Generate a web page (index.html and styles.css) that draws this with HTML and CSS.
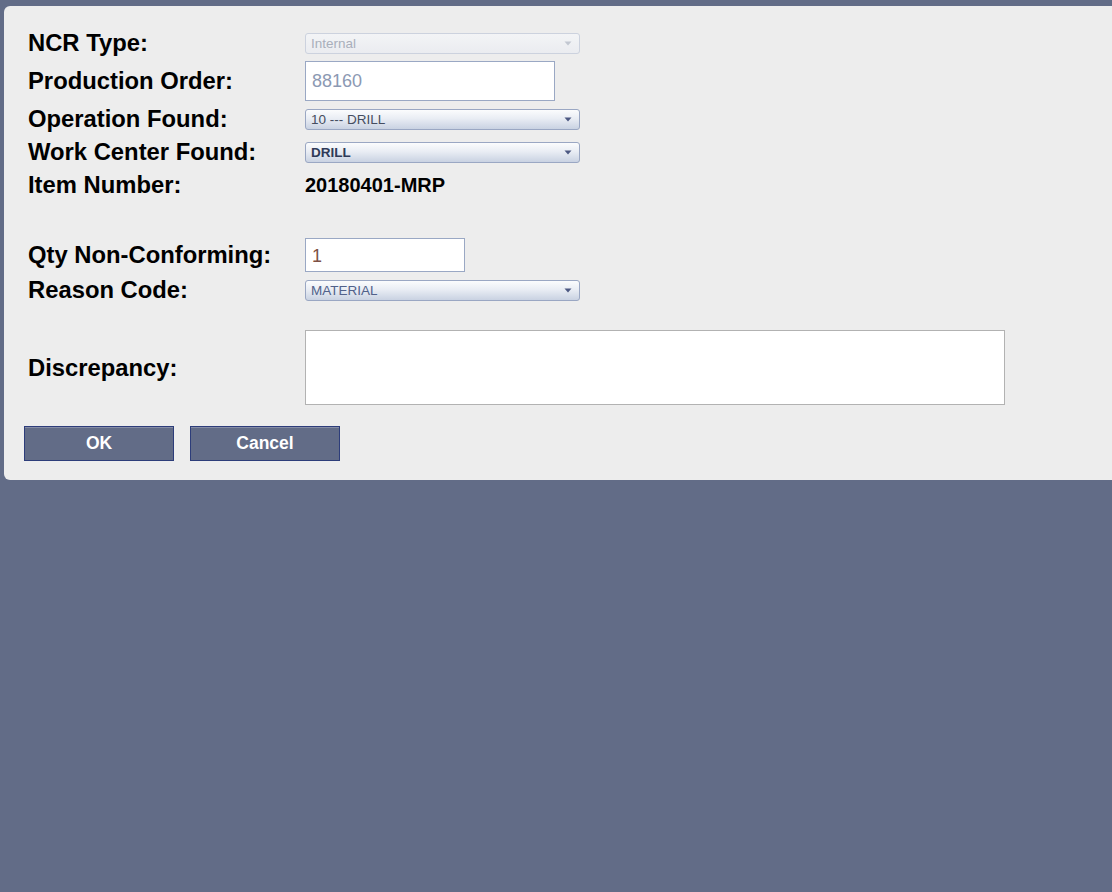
FILE: index.html
```html
<!DOCTYPE html>
<html>
<head>
<meta charset="utf-8">
<link rel="stylesheet" href="styles.css">
</head>
<body>
<div class="panel">
  <div class="form">
    <div class="label r1">NCR Type:</div>
    <div class="field r1">
      <div class="sel disabled"><span>Internal</span><svg class="arrow" width="8" height="5" viewBox="0 0 8 5"><path d="M0.5 0.5H7.5L4 4.5Z"/></svg></div>
    </div>

    <div class="label r2">Production Order:</div>
    <div class="field r2"><div class="txt po">88160</div></div>

    <div class="label r3">Operation Found:</div>
    <div class="field r3">
      <div class="sel"><span>10 --- DRILL</span><svg class="arrow" width="8" height="5" viewBox="0 0 8 5"><path d="M0.5 0.5H7.5L4 4.5Z"/></svg></div>
    </div>

    <div class="label r4">Work Center Found:</div>
    <div class="field r4">
      <div class="sel bold"><span>DRILL</span><svg class="arrow" width="8" height="5" viewBox="0 0 8 5"><path d="M0.5 0.5H7.5L4 4.5Z"/></svg></div>
    </div>

    <div class="label r5">Item Number:</div>
    <div class="field r5"><div class="value">20180401-MRP</div></div>

    <div class="spacer r6"></div>

    <div class="label r7">Qty Non-Conforming:</div>
    <div class="field r7"><div class="txt qty">1</div></div>

    <div class="label r8">Reason Code:</div>
    <div class="field r8">
      <div class="sel blue"><span>MATERIAL</span><svg class="arrow" width="8" height="5" viewBox="0 0 8 5"><path d="M0.5 0.5H7.5L4 4.5Z"/></svg></div>
    </div>

    <div class="spacer r9"></div>

    <div class="label r10">Discrepancy:</div>
    <div class="field r10"><div class="area"></div></div>
  </div>
  <div class="buttons">
    <button class="btn">OK</button>
    <button class="btn">Cancel</button>
  </div>
</div>
</body>
</html>
```
FILE: styles.css
```css
html, body {
  margin: 0;
  padding: 0;
  background: #626c87;
  overflow: hidden;
  height: 100%;
}
body {
  font-family: "Liberation Sans", Arial, sans-serif;
}
.panel {
  margin: 6px 0 0 4px;
  width: 1120px;
  height: 474px;
  box-sizing: border-box;
  background: #ededed;
  border-radius: 6px;
  padding: 25px 0 0 20px;
}
.form {
  display: grid;
  grid-template-columns: 281px 700px;
  grid-template-rows: 24px 51px 26px 40px 26px 38px 38px 32px 24px 75px;
  align-items: center;
}
.label {
  font-weight: bold;
  font-size: 23.8px;
  color: #000;
  padding-left: 4px;
  white-space: nowrap;
  line-height: 24px;
}
.spacer { grid-column: 1 / 3; }
.sel {
  box-sizing: border-box;
  width: 275px;
  height: 21px;
  border: 1px solid #9aa7c3;
  border-radius: 3px;
  background: linear-gradient(#fbfcfd, #e9edf4 45%, #c9d2e2);
  display: flex;
  align-items: center;
  justify-content: space-between;
  padding: 0 7px 0 5px;
  font-size: 13.5px;
  color: #454d60;
}
.sel .arrow { fill: #4c5882; }
.sel.disabled {
  border-color: #ccd2de;
  background: linear-gradient(#f3f4f6, #eaecf0);
  color: #a9afbb;
}
.sel.disabled .arrow { fill: #c2c7d1; }
.sel.bold span { font-weight: bold; color: #2f3a58; }
.sel.blue { color: #51618a; }
.txt {
  box-sizing: border-box;
  background: #fff;
  border: 1px solid #9aa8c4;
  display: flex;
  align-items: center;
  padding: 2px 0 0 6px;
  font-size: 18px;
}
.txt.po {
  width: 250px;
  height: 40px;
  color: #8c99b3;
}
.txt.qty {
  width: 160px;
  height: 34px;
  color: #7d5045;
}
.value {
  font-weight: bold;
  font-size: 20px;
  color: #000;
}
.area {
  box-sizing: border-box;
  width: 700px;
  height: 75px;
  background: #fff;
  border: 1px solid #b2b2b2;
}
.buttons {
  display: flex;
  gap: 16px;
  margin-top: 21px;
}
.btn {
  box-sizing: border-box;
  width: 150px;
  height: 35px;
  background: #626c87;
  border: 1px solid #2d3d7a;
  box-shadow: inset 0 1px 0 #858ca6;
  color: #fff;
  font-family: "Liberation Sans", Arial, sans-serif;
  font-weight: bold;
  font-size: 17.5px;
  padding: 0;
}
```
